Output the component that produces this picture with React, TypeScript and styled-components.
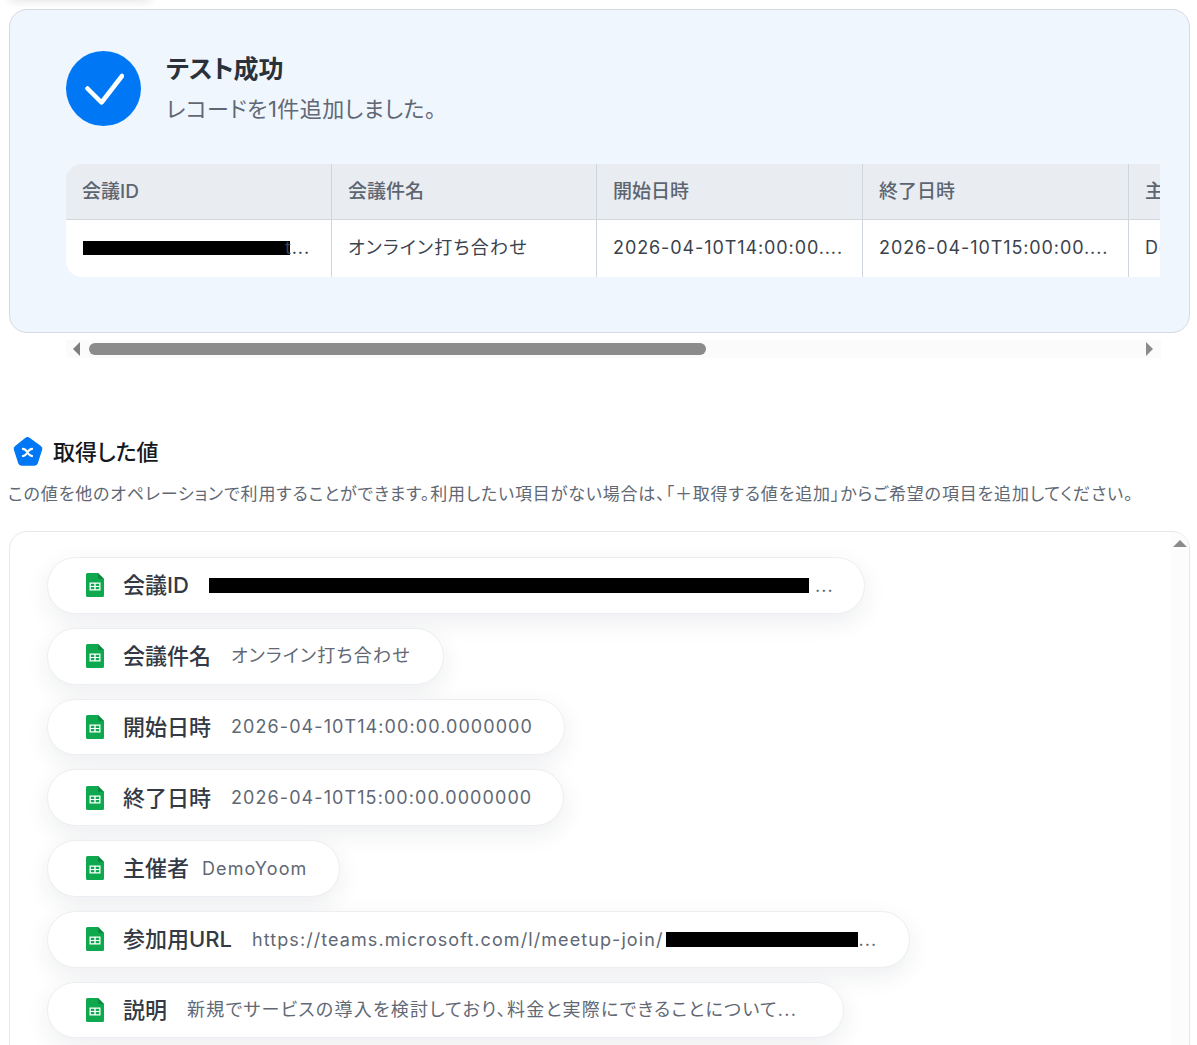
import styled, { createGlobalStyle } from 'styled-components';

const GlobalStyle = createGlobalStyle`
  html, body {
    margin: 0;
    padding: 0;
    height: 1045px;
    overflow: hidden;
    background: #fff;
  }
  body {
    font-family: Inter, "Noto Sans CJK JP", sans-serif;
    font-feature-settings: "palt";
  }
`;

const COLUMNS = ['会議ID', '会議件名', '開始日時', '終了日時', '主催者'];

interface Field {
  label: string;
  value?: string;
  redact?: number;
  tail?: string;
  cjk?: boolean;
  gap?: number;
  end?: number;
}

const FIELDS: Field[] = [
  { label: '会議ID', redact: 600, tail: ' ...', end: 30 },
  { label: '会議件名', value: 'オンライン打ち合わせ', cjk: true },
  { label: '開始日時', value: '2026-04-10T14:00:00.0000000', end: 31 },
  { label: '終了日時', value: '2026-04-10T15:00:00.0000000', end: 31 },
  { label: '主催者', value: 'DemoYoom', gap: 13 },
  { label: '参加用URL', value: 'https://teams.microsoft.com/l/meetup-join/', redact: 192, tail: '...' },
  { label: '説明', value: '新規でサービスの導入を検討しており、料金と実際にできることについて...', cjk: true, end: 46 },
];

const SheetIcon = () => (
  <svg width="18" height="24" viewBox="0 0 18 24">
    <path d="M1.500 0H12l6 6v16.500a1.500 1.500 0 0 1-1.500 1.500h-15A1.500 1.500 0 0 1 0 22.500V1.500A1.500 1.500 0 0 1 1.500 0z" fill="#0ea84f" />
    <path d="M12 0l6 6h-4.500A1.500 1.500 0 0 1 12 4.500z" fill="#0a8a40" />
    <path d="M3.500 9.500h11v8h-11z M4.800 10.800v2.100h3.500v-2.100z M9.700 10.800v2.100h3.500v-2.100z M4.800 14.100v2.100h3.500v-2.100z M9.700 14.100v2.100h3.500v-2.100z" fill="#fff" fillRule="evenodd" />
  </svg>
);

const App = () => (
  <Page>
    <GlobalStyle />
    <TopShadow />
    <SuccessPanel>
      <Result>
        <CheckCircle>
          <svg width="40" height="34" viewBox="0 0 40 34" fill="none">
            <path d="M3.500 16.500L17.500 30.500L38 4" stroke="#fff" strokeWidth="4.500" strokeLinecap="round" strokeLinejoin="round" />
          </svg>
        </CheckCircle>
        <ResultText>
          <ResultTitle>テスト成功</ResultTitle>
          <ResultSub>レコードを1件追加しました。</ResultSub>
        </ResultText>
      </Result>
      <TableClip>
        <Table>
          <thead>
            <tr>
              {COLUMNS.map((col) => (
                <Th key={col}>{col}</Th>
              ))}
            </tr>
          </thead>
          <tbody>
            <tr>
              <Td>
                <CellRedact />
                t...
              </Td>
              <Td $cjk>オンライン打ち合わせ</Td>
              <Td>2026-04-10T14:00:00....</Td>
              <Td>2026-04-10T15:00:00....</Td>
              <Td>DemoYoom</Td>
            </tr>
          </tbody>
        </Table>
      </TableClip>
    </SuccessPanel>

    <HScroll>
      <ArrowLeft />
      <HThumb />
      <ArrowRight />
    </HScroll>

    <Heading>
      <svg width="33" height="33" viewBox="0 0 32 32">
        <path d="M14 1.600a3.400 3.400 0 0 1 4 0l11 8a3.400 3.400 0 0 1 1.200 3.800l-4.200 13a3.400 3.400 0 0 1-3.200 2.400H10.200A3.400 3.400 0 0 1 7 26.400l-4.200-13A3.400 3.400 0 0 1 4 9.600z" fill="#0077f4" />
        <path d="M11.500 12.500c2 0 3 1 4.500 3.500s2.500 3.500 4.500 3.500M20.500 12.500c-2 0-3 1-4.500 3.500s-2.500 3.500-4.500 3.500" stroke="#fff" strokeWidth="2" fill="none" strokeLinecap="round" />
      </svg>
      <HeadingText>取得した値</HeadingText>
    </Heading>
    <Description>
      この値を他のオペレーションで利用することができます。利用したい項目がない場合は、「＋取得する値を追加」からご希望の項目を追加してください。
    </Description>

    <ListPanel>
      <Pills>
        {FIELDS.map((field) => (
          <Pill key={field.label} $end={field.end ?? 32}>
            <SheetIcon />
            <PillLabel>{field.label}</PillLabel>
            <PillValue $cjk={field.cjk} $gap={field.gap ?? 20}>
              {field.value}
              {field.redact && <Redact $width={field.redact} $inset={field.value ? 3 : 0} />}
              {field.tail}
            </PillValue>
          </Pill>
        ))}
      </Pills>
      <VScroll>
        <ArrowUp />
      </VScroll>
    </ListPanel>
  </Page>
);

export default App;

const Page = styled.div`
  position: relative;
  width: 1197px;
  height: 1045px;
  overflow: hidden;
  padding: 9px 7px 0 9px;
  box-sizing: border-box;
`;

const TopShadow = styled.div`
  position: absolute;
  left: 10px;
  top: -12px;
  width: 140px;
  height: 12px;
  box-shadow: 0 2px 8px rgba(0, 0, 0, 0.1);
`;

const SuccessPanel = styled.section`
  height: 324px;
  box-sizing: border-box;
  padding: 41px 29px 0 56px;
  background: #eff6fe;
  border: 1px solid #d3dae2;
  border-radius: 18px;
`;

const Result = styled.div`
  display: flex;
  align-items: center;
  gap: 25px;
`;

const CheckCircle = styled.div`
  width: 75px;
  height: 75px;
  border-radius: 50%;
  background: #0077f4;
  display: flex;
  align-items: center;
  justify-content: center;
`;

const ResultText = styled.div`
  display: flex;
  flex-direction: column;
  gap: 9px;
`;

const ResultTitle = styled.div`
  font-size: 25px;
  line-height: 32px;
  font-weight: 700;
  color: #2a313b;
`;

const ResultSub = styled.div`
  font-size: 22px;
  line-height: 30px;
  letter-spacing: 0.02em;
  color: #5f6874;
`;

const TableClip = styled.div`
  margin-top: 38px;
  overflow: hidden;
  border-radius: 16px 0 0 16px;
`;

const Table = styled.table`
  border-collapse: separate;
  border-spacing: 0;
  table-layout: fixed;
  width: 1329px;
`;

const Th = styled.th`
  width: 266px;
  height: 56px;
  box-sizing: border-box;
  padding: 0 16px 4px;
  text-align: left;
  font-size: 19px;
  font-weight: 500;
  color: #5c6570;
  background: #e9edf2;
  border-right: 1px solid #d0d6dd;
  border-bottom: 1px solid #d0d6dd;

  &:nth-child(2) {
    width: 265px;
  }
`;

const Td = styled.td<{ $cjk?: boolean }>`
  height: 57px;
  box-sizing: border-box;
  padding: 0 16px ${(props) => (props.$cjk ? '6px' : '2px')};
  font-size: 18px;
  letter-spacing: ${(props) => (props.$cjk ? '0.07em' : '0.05em')};
  color: #3a424d;
  background: #fff;
  border-right: 1px solid #d0d6dd;
  white-space: nowrap;
  overflow: hidden;
`;

const CellRedact = styled.span`
  display: inline-block;
  width: 207px;
  height: 14px;
  margin: 0 -5px 0 1px;
  background: #000;
  vertical-align: -1px;
`;

const HScroll = styled.div`
  margin: 7px 29px 0 57px;
  height: 18px;
  background: #fbfbfb;
  display: flex;
  align-items: center;
  padding: 0 7px;
`;

const HThumb = styled.div`
  width: 617px;
  height: 12px;
  margin-left: 9px;
  margin-right: auto;
  border-radius: 6px;
  background: #8b8b8b;
`;

const ArrowLeft = styled.div`
  width: 0;
  height: 0;
  border-style: solid;
  border-width: 7px 7px 7px 0;
  border-color: transparent #7f7f7f transparent transparent;
`;

const ArrowRight = styled.div`
  width: 0;
  height: 0;
  margin-right: 1px;
  border-style: solid;
  border-width: 7px 0 7px 7px;
  border-color: transparent transparent transparent #8b8b8b;
`;

const Heading = styled.div`
  margin-top: 76px;
  margin-left: 2px;
  display: flex;
  align-items: center;
  gap: 9px;
  height: 36px;
`;

const HeadingText = styled.h2`
  margin: 0;
  font-size: 22px;
  line-height: 36px;
  font-weight: 500;
  color: #15191f;
`;

const Description = styled.p`
  margin: 12px 0 0 -1px;
  font-size: 17px;
  line-height: 24px;
  letter-spacing: 0.05em;
  color: #5f6874;
  white-space: nowrap;
`;

const ListPanel = styled.section`
  position: relative;
  margin-top: 25px;
  height: 600px;
  box-sizing: border-box;
  border: 1px solid #e4e7eb;
  border-radius: 18px 18px 0 0;
  overflow: hidden;
`;

const Pills = styled.div`
  display: flex;
  flex-direction: column;
  align-items: flex-start;
  gap: 14px;
  padding: 25px 0 0 37px;
`;

const Pill = styled.div<{ $end: number }>`
  height: 56.75px;
  box-sizing: border-box;
  display: flex;
  align-items: center;
  padding: 0 ${(props) => props.$end}px 0 38px;
  background: #fff;
  border: 1px solid #eceef1;
  border-radius: 29px;
  box-shadow: 0 8px 24px rgba(30, 40, 60, 0.08);
  white-space: nowrap;
`;

const PillLabel = styled.span`
  margin-left: 19px;
  padding-bottom: 4px;
  font-size: 22px;
  font-weight: 500;
  color: #333a45;
`;

const PillValue = styled.span<{ $cjk?: boolean; $gap: number }>`
  margin-left: ${(props) => props.$gap}px;
  padding-bottom: ${(props) => (props.$cjk ? '4px' : '0')};
  font-size: 18px;
  letter-spacing: ${(props) => (props.$cjk ? '0.07em' : '0.06em')};
  color: #5f6874;
`;

const Redact = styled.span<{ $width: number; $inset: number }>`
  display: inline-block;
  width: ${(props) => props.$width}px;
  height: 15px;
  margin-left: ${(props) => props.$inset}px;
  background: #000;
  vertical-align: -1px;
`;

const VScroll = styled.div`
  position: absolute;
  top: 0;
  right: 0;
  bottom: 0;
  width: 19px;
  background: #fcfcfc;
`;

const ArrowUp = styled.div`
  position: absolute;
  top: 8px;
  left: 3px;
  width: 0;
  height: 0;
  border-style: solid;
  border-width: 0 7px 7px 7px;
  border-color: transparent transparent #8b8b8b transparent;
`;
